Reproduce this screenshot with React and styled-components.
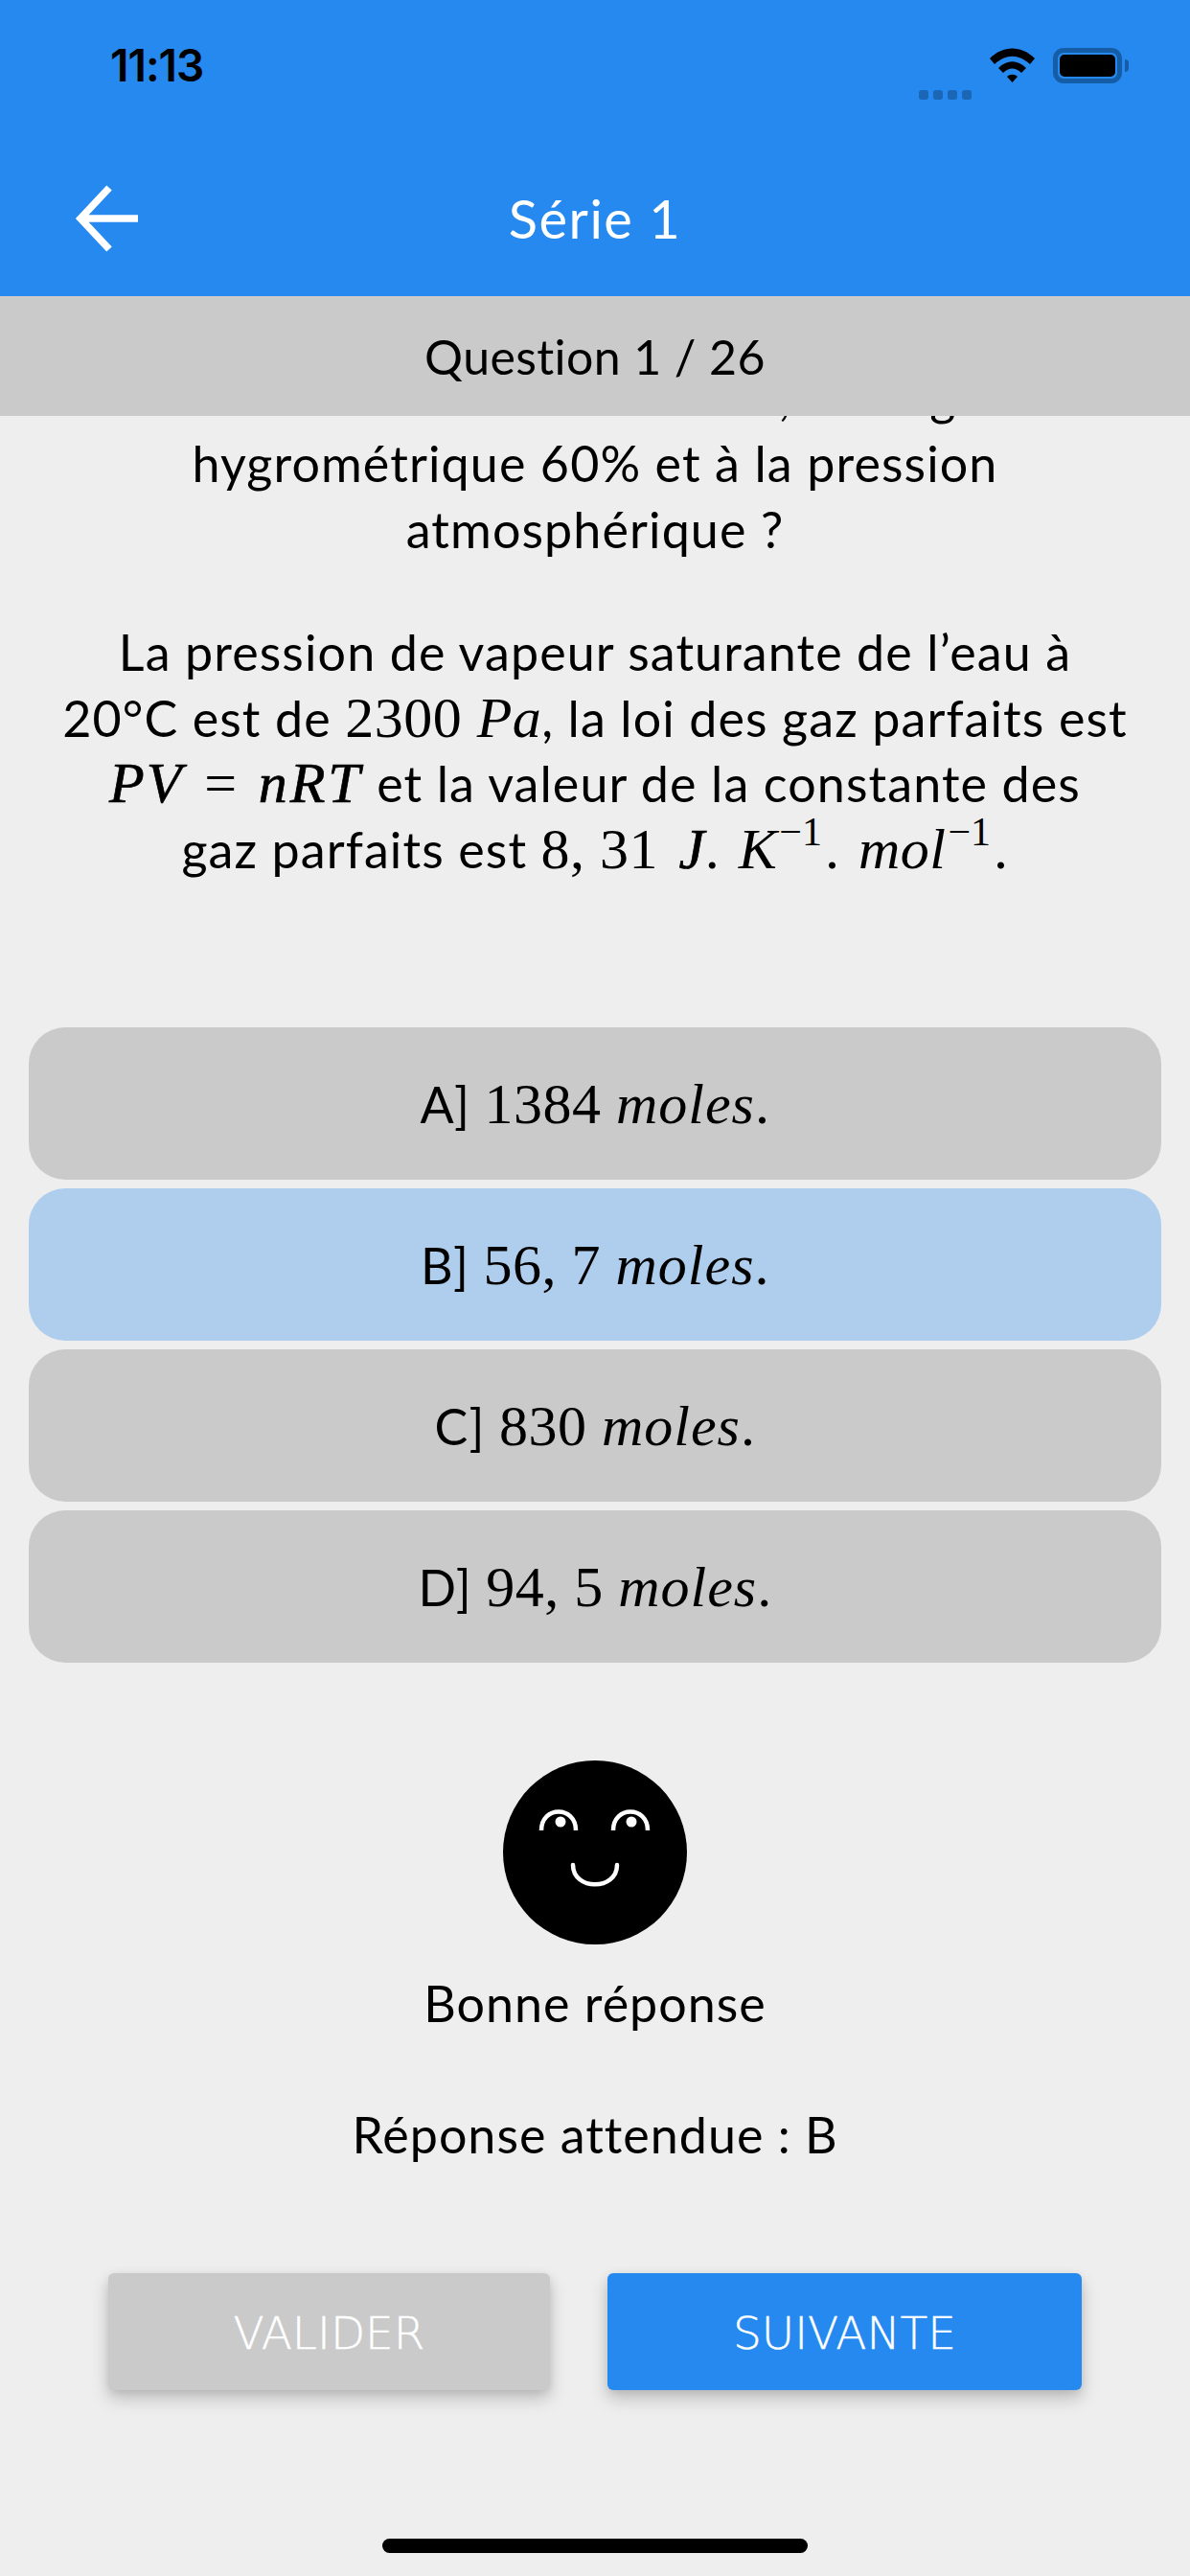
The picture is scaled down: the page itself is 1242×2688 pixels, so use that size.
import React from "react";
import styled, { createGlobalStyle } from "styled-components";

const Global = createGlobalStyle`
  html, body { margin: 0; padding: 0; background: #eeeeee; }
  * { box-sizing: border-box; }
`;
const Page = styled.div`
  width: 1242px; height: 2688px; background: #eeeeee; overflow: hidden;
  display: flex; flex-direction: column;
  font-family: "Lato", "Liberation Sans", sans-serif; color: #000;
  font-size: 52px; letter-spacing: 1.1px;
`;
const TopBar = styled.header`
  height: 309px; background: #2689ef; display: flex; flex-direction: column;
`;
const StatusRow = styled.div`
  height: 136px; padding: 0 64px 0 115px; display: flex; align-items: center; justify-content: space-between;
`;
const Clock = styled.span`
  font-family: "Inter", sans-serif; font-weight: 600; font-size: 46px; letter-spacing: -1px; color: #000;
`;
const Indicators = styled.div`display: flex; align-items: center;`;
const Dots = styled.div`display: flex; gap: 5px; align-self: flex-end; margin: 0 19px 0 0; transform: translateY(17px);`;
const Dot = styled.i`display: block; width: 10px; height: 10px; border-radius: 3px; background: #1b66b5;`;
const Battery = styled.div`
  margin-left: 19px; width: 72px; height: 37px; border: 5px solid #155da6; border-radius: 11px; padding: 2px;
`;
const BatteryFill = styled.div`width: 100%; height: 100%; background: #000; border-radius: 5px;`;
const BatteryNub = styled.div`width: 4px; height: 13px; background: #155da6; border-radius: 0 4px 4px 0; margin-left: 3px;`;
const NavRow = styled.div`
  flex: 1; padding-top: 11px; display: grid; grid-template-columns: 1fr auto 1fr; align-items: center;
`;
const BackIcon = styled.svg`width: 72px; height: 72px; margin-left: 76px; display: block;`;
const Title = styled.h1`margin: 0; color: #fff; font-weight: 400; font-size: 56px; letter-spacing: 1.5px; line-height: 1;`;
const Counter = styled.div`
  height: 125px; background: #cacaca; display: flex; align-items: center; justify-content: center;
  font-size: 50px; letter-spacing: .4px;
`;
const Scroll = styled.section`
  height: 638px; overflow: hidden; display: flex; flex-direction: column; justify-content: flex-end;
  padding-bottom: 152px; text-align: center; line-height: 68.5px; flex-shrink: 0;
`;
const Para = styled.p`margin: 0; & + & { margin-top: 60px; }`;
const ClippedLine = styled.span`display: block; margin-bottom: 2px;`;
const M = styled.span`
  font-family: "Liberation Serif", serif; font-size: ${p => p.$size || 60}px; font-style: ${p => (p.$i ? "italic" : "normal")};
  letter-spacing: ${p => p.$ls ?? 0.5}px; line-height: 0; margin-right: ${p => p.$gap || 0}px;
  -webkit-text-stroke: ${p => (p.$heavy ? ".7px #000" : "0")};
`;
const Sup = styled.sup`font-family: "Liberation Serif", serif; font-size: 42px; letter-spacing: 0; line-height: 0; vertical-align: 24px; margin-left: 2px; margin-right: 3px;`;
const Options = styled.div`padding: 0 30px; display: flex; flex-direction: column; gap: 9px;`;
const Option = styled.div`
  height: 159px; border-radius: 38px; background: ${p => (p.$selected ? "#afceed" : "#cacaca")};
  display: flex; align-items: center; justify-content: center; white-space: pre;
`;
const Feedback = styled.div`
  margin-top: 102px; display: flex; flex-direction: column; align-items: center; letter-spacing: 1px;
`;
const Face = styled.svg`width: 192px; height: 192px; display: block;`;
const Verdict = styled.div`margin-top: 31px; line-height: 60px;`;
const Expected = styled.div`margin-top: 77px; line-height: 60px;`;
const Actions = styled.div`margin-top: 115px; padding: 0 113px; display: flex; justify-content: space-between;`;
const ActionButton = styled.button`
  height: 122px; width: ${p => p.$w}px; border: 0; border-radius: 6px; background: ${p => p.$bg}; color: #fff;
  font-family: "DejaVu Sans", sans-serif; font-weight: 200; font-size: 47px; padding: 2px 0 0;
  -webkit-text-stroke: .4px #fff;
  box-shadow: 0 9px 18px rgba(0,0,0,.2), 0 2px 8px rgba(0,0,0,.08);
`;
const HomeBar = styled.div`margin: 155px auto 0; width: 444px; height: 15px; border-radius: 8px; background: #000;`;

const Answer = ({ label, value, selected }) => (
  <Option $selected={selected}>
    {label}] <M>{value} </M><M $i $ls={1}>moles</M><M>.</M>
  </Option>
);

export default function App() {
  return (
    <Page>
      <Global />
      <TopBar>
        <StatusRow>
          <Clock>11:13</Clock>
          <Indicators>
            <Dots><Dot /><Dot /><Dot /><Dot /></Dots>
            <svg width="47" height="36" viewBox="0 0 47 36">
              <path fill="#000" d="M0 11 C14 -3 33 -3 47 11 L42 17 C30 6 17 6 5 17 Z" />
              <path fill="#000" d="M9 21 C18 12 29 12 38 21 L33 26 C27 20 20 20 14 26 Z" />
              <path fill="#000" d="M18 30 C21 27 26 27 29 30 L23.5 36 Z" />
            </svg>
            <Battery><BatteryFill /></Battery>
            <BatteryNub />
          </Indicators>
        </StatusRow>
        <NavRow>
          <BackIcon viewBox="0 0 72 72" fill="none" stroke="#fff" strokeWidth="7.5">
            <path d="M38 4 L8 36 L38 68 M8 36 H68" />
          </BackIcon>
          <Title>Série 1</Title>
          <span />
        </NavRow>
      </TopBar>
      <Counter>Question 1 / 26</Counter>
      <Scroll>
        <Para>
          <ClippedLine>Combien de moles à 20°C, au degré</ClippedLine>
          hygrométrique 60% et à la pression<br />
          atmosphérique ?
        </Para>
        <Para>
          La pression de vapeur saturante de l’eau à<br />
          20°C est de <M>2300 </M><M $i>Pa</M>, la loi des gaz parfaits est<br />
          <M $i $heavy $ls={2} $gap={22}>PV</M><M $gap={22}>=</M><M $i $heavy $ls={3}>nRT</M> et la valeur de la constante des<br />
          gaz parfaits est <M $gap={6}>8, 31 </M><M $i $heavy>J</M><M $gap={4}>. </M><M $i>K</M><Sup>−1</Sup><M $gap={4}>. </M><M $i>mol</M><Sup>−1</Sup><M>.</M>
        </Para>
      </Scroll>
      <Options>
        <Answer label="A" value="1384" />
        <Answer label="B" value="56, 7" selected />
        <Answer label="C" value="830" />
        <Answer label="D" value="94, 5" />
      </Options>
      <Feedback>
        <Face viewBox="0 0 192 192">
          <circle cx="96" cy="96" r="96" fill="#000" />
          <g fill="none" stroke="#fff" strokeWidth="4.5">
            <path d="M40 73 C40 47 76 47 76 73" />
            <path d="M115 73 C115 47 151 47 151 73" />
            <path d="M73 109 C73 136 119 136 119 109" strokeLinecap="round" />
          </g>
          <circle cx="60" cy="64" r="5.5" fill="#fff" />
          <circle cx="134" cy="64" r="5.5" fill="#fff" />
        </Face>
        <Verdict>Bonne réponse</Verdict>
        <Expected>Réponse attendue : B</Expected>
      </Feedback>
      <Actions>
        <ActionButton $w={461} $bg="#cacaca">VALIDER</ActionButton>
        <ActionButton $w={495} $bg="#2689ef">SUIVANTE</ActionButton>
      </Actions>
      <HomeBar />
    </Page>
  );
}
